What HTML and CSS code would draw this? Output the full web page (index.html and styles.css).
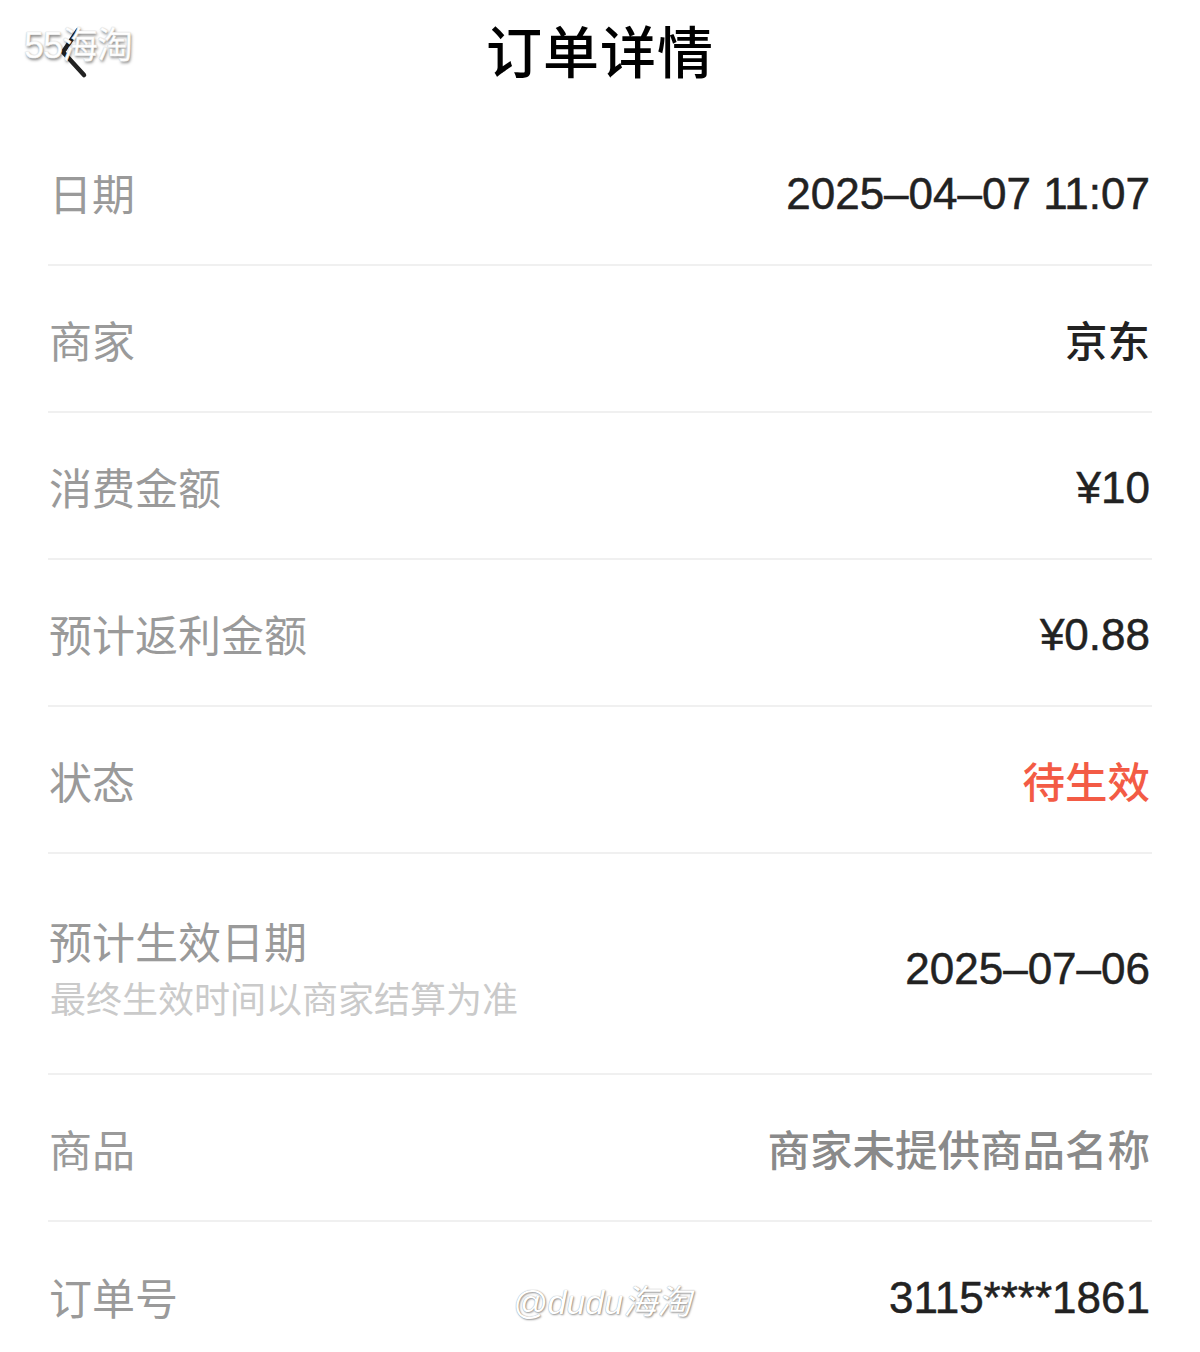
FILE: index.html
```html
<!DOCTYPE html>
<html lang="zh-CN">
<head>
<meta charset="utf-8">
<title>订单详情</title>
<link rel="stylesheet" href="styles.css">
</head>
<body>
<div class="page">
  <header class="topbar">
    <div class="back">
      <svg width="40" height="60" viewBox="0 0 40 60" aria-hidden="true">
        <path d="M22 8 L7 30 L28 53" fill="none" stroke="#222" stroke-width="4.5" stroke-linecap="round" stroke-linejoin="round"/>
      </svg>
    </div>
    <h1 class="title">订单详情</h1>
    <div class="brand">55海淘</div>
  </header>

  <main class="list">
    <div class="row">
      <div class="label">日期</div>
      <div class="value">2025–04–07 11:07</div>
    </div>
    <div class="row">
      <div class="label">商家</div>
      <div class="value cjk">京东</div>
    </div>
    <div class="row">
      <div class="label">消费金额</div>
      <div class="value">¥10</div>
    </div>
    <div class="row">
      <div class="label">预计返利金额</div>
      <div class="value">¥0.88</div>
    </div>
    <div class="row">
      <div class="label">状态</div>
      <div class="value cjk status">待生效</div>
    </div>
    <div class="row tall">
      <div class="labels">
        <div class="label">预计生效日期</div>
        <div class="sublabel">最终生效时间以商家结算为准</div>
      </div>
      <div class="value">2025–07–06</div>
    </div>
    <div class="row">
      <div class="label">商品</div>
      <div class="value cjk muted">商家未提供商品名称</div>
    </div>
    <div class="row last">
      <div class="label">订单号</div>
      <div class="value">3115****1861</div>
      <div class="watermark">@dudu海淘</div>
    </div>
  </main>
</div>
</body>
</html>
```

FILE: styles.css
```css
* { box-sizing: border-box; margin: 0; padding: 0; }

html, body {
  background: #fff;
  width: 1200px;
  height: 1352px;
  overflow: hidden;
}

body {
  font-family: "Liberation Sans", "Noto Sans CJK SC", sans-serif;
  color: #222;
}

.page {
  width: 1200px;
}

.topbar {
  position: relative;
  height: 119px;
  display: flex;
  justify-content: center;
}

.title {
  font-family: "Noto Sans CJK SC", sans-serif;
  font-size: 56px;
  font-weight: 500;
  color: #000;
  line-height: 1;
  padding-top: 21px;
  letter-spacing: 1px;
}

.back {
  position: absolute;
  left: 56px;
  top: 22px;
}

.brand {
  position: absolute;
  left: 24px;
  top: 16px;
  font-family: "Liberation Sans", "Noto Sans CJK SC", sans-serif;
  font-size: 36px;
  font-weight: 400;
  color: #fff;
  letter-spacing: -1px;
  -webkit-text-stroke: 0.6px #f4f4f4;
  text-shadow: 1px 2px 3px rgba(0,0,0,0.5), 0 0 1px rgba(0,0,0,0.4);
}

.list {
  margin: 0 48px;
}

.row {
  position: relative;
  height: 147px;
  display: flex;
  align-items: center;
  justify-content: space-between;
  padding: 0 2px 0 2px;
  border-bottom: 2px solid #f0f0f0;
}

.row.tall {
  height: 221px;
  padding-top: 6px;
}

.row.last {
  border-bottom: none;
}

.labels {
  display: flex;
  flex-direction: column;
  gap: 10px;
}

.label {
  font-family: "Noto Sans CJK SC", sans-serif;
  font-size: 43px;
  color: #9a9a9a;
  line-height: 50px;
  margin-left: -1px;
}

.sublabel {
  font-family: "Noto Sans CJK SC", sans-serif;
  font-size: 36px;
  color: #cacaca;
  line-height: 44px;
}

.value {
  font-family: "Liberation Sans", "Noto Sans CJK SC", sans-serif;
  font-size: 44px;
  color: #222;
  line-height: 50px;
  padding-top: 4px;
  -webkit-text-stroke: 0.5px #222;
}

.value.cjk {
  font-family: "Noto Sans CJK SC", sans-serif;
  font-size: 42.5px;
  font-weight: 500;
  padding-top: 0;
  -webkit-text-stroke: 0;
}

.value.status {
  color: #f35b45;
}

.value.muted {
  color: #8a8a8a;
}

.watermark {
  position: absolute;
  left: 465px;
  top: 53px;
  font-family: "Liberation Sans", "Noto Sans CJK SC", sans-serif;
  font-size: 34px;
  font-style: italic;
  color: #fff;
  text-shadow: 1px 1px 2px rgba(0,0,0,0.4), 0 0 1px rgba(0,0,0,0.4);
}
```
